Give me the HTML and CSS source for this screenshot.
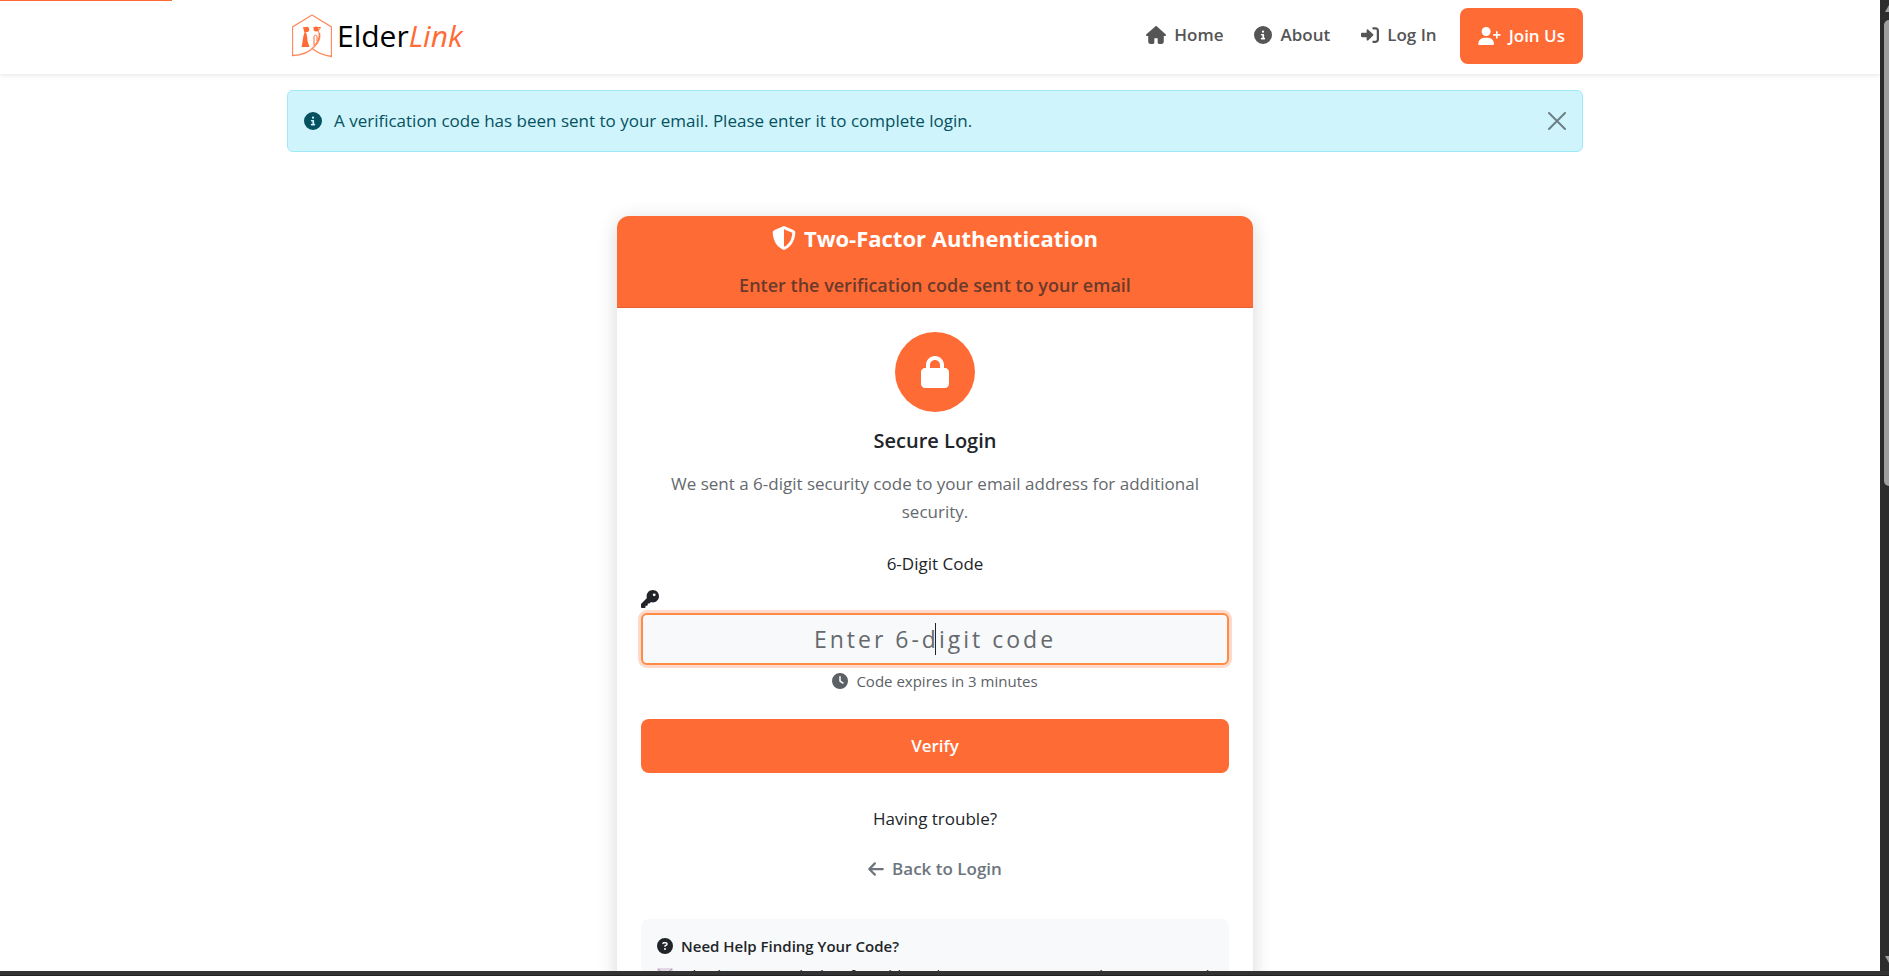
FILE: index.html
```html
<!DOCTYPE html>
<html lang="en">
<head>
  <meta charset="UTF-8">
  <meta name="viewport" content="width=device-width, initial-scale=1.0">
  <title>Two-Factor Authentication - ElderLink</title>
  <link rel="stylesheet" href="styles.css">
</head>
<body>
  <div class="window">
    <div class="page">
      <div class="progress"></div>
      <header class="navbar">
        <div class="container nav-inner">
          <a class="brand" href="#">
            <svg class="brand-logo" viewBox="0 0 40 44" aria-hidden="true">
              <path d="M20 1L39.500 13V42.500C31 41.500 25 38.500 19.500 34M20 1L.500 13V41.500C10 41.500 18 37.500 23 32C27 28 28.500 24 27.500 19" fill="none" stroke="#ff8a60" stroke-width="1.300"/>
              <circle cx="14.500" cy="15.500" r="2.700" fill="#ff6b35"/>
              <path d="M11 13L15 13.500L13.500 18C15 20 15.500 24 15.500 27L17.500 33H9.500C11 28 10.500 23 12.500 18.500Z" fill="#ff6b35"/>
              <circle cx="24" cy="15" r="2.500" fill="#ff6b35"/>
              <path d="M21.500 13.500L28.500 13.500L26 17C28 20 28 26 22 31.500V23C22 20.500 25 20.500 25 23V27" fill="none" stroke="#ff6b35" stroke-width="1"/>
            </svg>
            <span>Elder<em>Link</em></span>
          </a>
          <nav class="nav-links">
            <a class="nav-link" href="#">
              <svg class="icon icon-wide" viewBox="0 0 576 512" aria-hidden="true"><path d="M575.800 255.500c0 18-15 32.100-32 32.100h-32l.7 160.200c0 35.300-28.700 64-64 64H376c-22 0-40-18-40-40V352H240v120c0 22-18 40-40 40H128c-35 0-64-29-64-64V287.600H32c-18 0-32-14-32-32.100 0-9 3-17 10-24L266.400 8c7-7 15-8 22-8s15 2 21 7L564.800 231.500c8 7 12 15 11 24z"/></svg>
              Home
            </a>
            <a class="nav-link" href="#">
              <svg class="icon" viewBox="0 0 512 512" aria-hidden="true"><path d="M256 512A256 256 0 1 0 256 0a256 256 0 1 0 0 512zM216 336h24v-64h-24c-13 0-24-11-24-24s11-24 24-24h48c13 0 24 11 24 24v88h8c13 0 24 11 24 24s-11 24-24 24h-80c-13 0-24-11-24-24s11-24 24-24zm40-208a32 32 0 1 1 0 64 32 32 0 1 1 0-64z"/></svg>
              About
            </a>
            <a class="nav-link" href="#">
              <svg class="icon" viewBox="0 0 512 512" aria-hidden="true"><path d="M352 96h64c18 0 32 14 32 32v256c0 18-14 32-32 32h-64c-18 0-32 14-32 32s14 32 32 32h64c53 0 96-43 96-96V128c0-53-43-96-96-96h-64c-18 0-32 14-32 32s14 32 32 32zm-7.500 177c4.800-4.500 7.500-10.800 7.500-17.400s-2.700-12.900-7.500-17.400l-144-136c-7-6.600-17.200-8.400-26-4.600S160 110 160 119.600v72H32c-17.700 0-32 14.300-32 32v64c0 17.700 14.300 32 32 32h128v72c0 9.600 5.700 18.200 14.500 22s19 2 26-4.600z"/></svg>
              Log In
            </a>
            <a class="join" href="#">
              <svg class="icon icon-join" viewBox="0 0 640 512" aria-hidden="true"><path d="M96 128a128 128 0 1 1 256 0 128 128 0 1 1-256 0zM0 482.300C0 383.800 79.800 304 178.300 304h91.400C368.200 304 448 383.800 448 482.300c0 16.400-13.300 29.700-29.700 29.700H29.700C13.300 512 0 498.700 0 482.300zM504 312v-64h-64c-13.300 0-24-10.700-24-24s10.700-24 24-24h64v-64c0-13.300 10.700-24 24-24s24 10.700 24 24v64h64c13.300 0 24 10.700 24 24s-10.700 24-24 24h-64v64c0 13.300-10.700 24-24 24s-24-10.700-24-24z"/></svg>
              Join Us
            </a>
          </nav>
        </div>
      </header>

      <main class="container">
        <div class="alert" role="alert">
          <svg class="icon" viewBox="0 0 512 512" aria-hidden="true"><path d="M256 512A256 256 0 1 0 256 0a256 256 0 1 0 0 512zM216 336h24v-64h-24c-13 0-24-11-24-24s11-24 24-24h48c13 0 24 11 24 24v88h8c13 0 24 11 24 24s-11 24-24 24h-80c-13 0-24-11-24-24s11-24 24-24zm40-208a32 32 0 1 1 0 64 32 32 0 1 1 0-64z"/></svg>
          <span>A verification code has been sent to your email. Please enter it to complete login.</span>
          <button class="close" type="button" aria-label="Close">
            <svg viewBox="0 0 18 18" aria-hidden="true"><path d="M1 1l16 16M17 1L1 17" stroke="currentColor" stroke-width="2" stroke-linecap="round"/></svg>
          </button>
        </div>

        <section class="card">
          <div class="card-header">
            <h1>
              <svg class="icon-shield" viewBox="0 0 512 512" aria-hidden="true"><path fill-rule="evenodd" d="M256 0c4.600 0 9.200 1 13.400 2.900l188.300 79.900c22 9.300 38.400 31 38.300 57.200-.5 99.200-41.300 280.700-213.600 363.200-16.700 8-36.100 8-52.800 0C57.300 420.700 16.500 239.200 16 140c-.1-26.200 16.300-47.900 38.300-57.200L242.700 2.900C246.800 1 251.400 0 256 0zm0 66.800V445c138-66.800 175.100-214.800 176-303.400z"/></svg>
              Two-Factor Authentication
            </h1>
            <p>Enter the verification code sent to your email</p>
          </div>
          <div class="card-body">
            <div class="lock">
              <svg viewBox="0 0 448 512" aria-hidden="true"><path fill-rule="evenodd" d="M144 144v48h160v-48c0-44.200-35.800-80-80-80s-80 35.800-80 80zM80 192v-48C80 64.500 144.500 0 224 0s144 64.500 144 144v48h16c35.300 0 64 28.700 64 64v192c0 35.300-28.700 64-64 64H64c-35.300 0-64-28.700-64-64V256c0-35.300 28.700-64 64-64z"/></svg>
            </div>
            <h2>Secure Login</h2>
            <p class="intro">We sent a 6-digit security code to your email address for additional security.</p>

            <form class="code-form">
              <label for="code">6-Digit Code</label>
              <svg class="icon icon-key" viewBox="0 0 512 512" aria-hidden="true"><path fill-rule="evenodd" d="M336 352c97.200 0 176-78.800 176-176S433.200 0 336 0 160 78.800 160 176c0 18.700 2.900 36.800 8.300 53.700L7 391c-4.500 4.500-7 10.600-7 17v80c0 13.300 10.700 24 24 24h80c13.300 0 24-10.700 24-24v-40h40c13.300 0 24-10.700 24-24v-40h40c6.400 0 12.500-2.500 17-7l33.300-33.300c16.900 5.400 35 8.300 53.700 8.300zM376 96a40 40 0 1 1 0 80 40 40 0 1 1 0-80z"/></svg>
              <div class="code-field">
                <input id="code" type="text" inputmode="numeric" maxlength="6" placeholder="Enter 6-digit code" autocomplete="off">
                <span class="caret"></span>
              </div>
              <p class="expires">
                <svg class="icon-small" viewBox="0 0 512 512" aria-hidden="true"><path fill-rule="evenodd" d="M256 0a256 256 0 1 1 0 512A256 256 0 1 1 256 0zm-24 120v136c0 8 4 15.500 10.700 20l96 64c11 7.400 25.900 4.400 33.300-6.700s4.400-25.900-6.700-33.300L280 243.200V120c0-13.300-10.700-24-24-24s-24 10.700-24 24z"/></svg>
                Code expires in 3 minutes
              </p>
              <button class="verify" type="submit">Verify</button>
            </form>

            <p class="trouble">Having trouble?</p>
            <a class="back" href="#">
              <svg class="icon-back" viewBox="0 0 448 512" aria-hidden="true"><path d="M9.400 233.400c-12.500 12.500-12.500 32.800 0 45.300l160 160c12.500 12.500 32.800 12.500 45.300 0s12.500-32.800 0-45.300L109.200 288H416c17.700 0 32-14.300 32-32s-14.300-32-32-32H109.300l105.300-105.400c12.500-12.500 12.500-32.800 0-45.300s-32.800-12.500-45.300 0z"/></svg>
              Back to Login
            </a>

            <div class="help">
              <h3>
                <svg class="icon-small" viewBox="0 0 512 512" aria-hidden="true"><path fill-rule="evenodd" d="M256 512A256 256 0 1 0 256 0a256 256 0 1 0 0 512zM169.800 165.300c7.900-22.300 29.100-37.300 52.800-37.300h58.300c34.900 0 63.100 28.300 63.100 63.100 0 22.600-12.100 43.500-31.700 54.800L280 264.400c-.2 13-10.900 23.600-24 23.600-13.300 0-24-10.700-24-24v-13.500c0-8.600 4.600-16.500 12.100-20.800l44.300-25.400c4.700-2.700 7.600-7.700 7.600-13.100 0-8.400-6.800-15.100-15.100-15.100h-58.300c-3.400 0-6.400 2.100-7.500 5.300l-.4 1.200c-4.400 12.500-18.200 19-30.600 14.600s-19-18.200-14.600-30.600zM256 320a32 32 0 1 1 0 64 32 32 0 1 1 0-64z"/></svg>
                Need Help Finding Your Code?
              </h3>
              <ul>
                <li>
                  <svg class="icon-mail" viewBox="0 0 16 16" aria-hidden="true"><rect y="1" width="16" height="13" rx="1" fill="#e4d8e6"/><path d="M1 2l7 6 7-6" fill="none" stroke="#a98bb0"/></svg>
                  Check your email inbox for "ElderLink - Your Two-Factor Authentication Code"
                </li>
              </ul>
            </div>
          </div>
        </section>
      </main>
    </div>
    <div class="scrollbar">
      <span class="arrow-up"></span>
      <span class="thumb"></span>
      <span class="arrow-down"></span>
    </div>
  </div>
  <div class="bottom-edge"></div>
</body>
</html>
```
FILE: styles.css
```css
* {
  box-sizing: border-box;
}
body {
  margin: 0;
  height: 100vh;
  display: flex;
  flex-direction: column;
  overflow: hidden;
  background: #fff;
  color: #212529;
  font-family: "Open Sans", "Noto Sans", sans-serif;
  font-size: 17px;
  line-height: 28px;
}
h1, h2, h3, p, ul {
  margin: 0;
  padding: 0;
}
a {
  color: inherit;
  text-decoration: none;
}
svg {
  flex-shrink: 0;
  fill: currentColor;
}
.window {
  flex: 1;
  min-height: 0;
  display: flex;
}
.page {
  flex: 1;
  position: relative;
  overflow: hidden;
}
.container {
  width: calc(100% - 10px);
  max-width: 1296px;
  margin-left: max(0px, calc(50% - 653px));
}
.progress {
  position: absolute;
  top: 0;
  left: 0;
  width: 172px;
  height: 1px;
  background: #ff6b35;
}

/* Navbar */
.navbar {
  box-shadow: 0 2px 4px rgba(0, 0, 0, 0.08);
}
.nav-inner {
  height: 74px;
  padding-bottom: 2px;
  display: flex;
  align-items: center;
  justify-content: space-between;
}
.brand {
  display: flex;
  align-items: center;
  gap: 5px;
  padding-left: 5px;
  color: #000;
  font-size: 30px;
}
.brand-logo {
  width: 40px;
  height: 44px;
}
.brand em {
  color: #ff6b35;
}
.nav-links {
  display: flex;
  align-items: center;
  gap: 31px;
  color: #555;
  font-weight: 600;
}
.nav-link, .join {
  display: flex;
  align-items: center;
  gap: 8px;
}
.nav-link {
  padding-bottom: 2px;
}
.join {
  height: 56px;
  margin-left: -8px;
  padding: 0 18px;
  border-radius: 8px;
  background: #ff6b35;
  color: #fff;
}
.icon {
  width: 18px;
  height: 18px;
}
.icon-wide {
  width: 20px;
}
.icon-join {
  width: 23px;
}

/* Alert */
.alert {
  display: flex;
  align-items: center;
  gap: 12px;
  margin-top: 16px;
  padding: 16px;
  border: 1px solid #9eeaf9;
  border-radius: 6px;
  background: #cff4fc;
  color: #055160;
}
.close {
  display: flex;
  margin-left: auto;
  padding: 0;
  border: 0;
  background: none;
  color: #6b7f85;
  cursor: pointer;
}
.close svg {
  width: 18px;
  height: 18px;
}

/* Card */
.card {
  max-width: 636px;
  margin: 64px auto 0;
  border-radius: 12px;
  box-shadow: 0 4px 20px rgba(0, 0, 0, 0.16);
  text-align: center;
}
.card-header {
  padding: 8px 16px;
  border-bottom: 1px solid #e66030;
  border-radius: 12px 12px 0 0;
  background: #ff6b35;
}
.card-header h1 {
  display: flex;
  align-items: center;
  justify-content: center;
  gap: 8px;
  color: #fff;
  font-size: 22px;
  line-height: 28px;
  font-weight: 700;
}
.card-header p {
  margin-top: 19px;
  color: #6b3a2a;
  font-size: 18px;
  font-weight: 600;
}
.icon-shield {
  width: 24px;
  height: 24px;
}
.card-body {
  padding: 24px;
}
.lock {
  width: 80px;
  height: 80px;
  margin: 0 auto 16px;
  display: flex;
  align-items: center;
  justify-content: center;
  border-radius: 50%;
  background: #ff6b35;
  color: #fff;
}
.lock svg {
  width: 28px;
  height: 32px;
}
.card-body h2 {
  font-size: 20px;
  line-height: 26px;
  font-weight: 600;
}
.intro {
  margin: 16px 24px 24px;
  color: #65696d;
}
.code-form {
  display: flex;
  flex-direction: column;
}
.icon-key {
  margin: 12px 0 5px;
}
.code-field {
  position: relative;
}
.code-form input {
  display: block;
  width: 100%;
  height: 52px;
  padding: 0 16px;
  border: 2px solid #ff8c42;
  border-radius: 6px;
  outline: 0;
  background: #f8f9fa;
  box-shadow: 0 0 0 3px rgba(255, 107, 53, 0.25);
  color: #212529;
  font: inherit;
  font-size: 23px;
  letter-spacing: 3px;
  text-align: center;
}
.code-form input::placeholder {
  color: #65696d;
  opacity: 1;
}
.caret {
  position: absolute;
  top: 10px;
  left: 50%;
  width: 1px;
  height: 32px;
  background: #212529;
}
.expires {
  display: flex;
  align-items: center;
  justify-content: center;
  gap: 8px;
  margin-top: 4px;
  color: #5c6166;
  font-size: 15px;
  line-height: 24px;
}
.icon-small {
  width: 16px;
  height: 16px;
}
.verify {
  height: 54px;
  margin-top: 26px;
  border: 0;
  border-radius: 8px;
  background: #ff6b35;
  color: #fff;
  font: inherit;
  font-weight: 600;
  cursor: pointer;
}
.trouble {
  margin-top: 32px;
}
.back {
  display: flex;
  align-items: center;
  justify-content: center;
  gap: 8px;
  margin-top: 22px;
  color: #6c757d;
  font-weight: 600;
}
.icon-back {
  width: 16px;
  height: 18px;
}
.help {
  margin-top: 36px;
  padding: 16px;
  border-radius: 8px;
  background: #f8f9fa;
  text-align: left;
}
.help h3 {
  display: flex;
  align-items: center;
  gap: 8px;
  font-size: 15px;
  line-height: 22px;
  font-weight: 600;
}
.help ul {
  margin-top: 6px;
  list-style: none;
  font-size: 15px;
  line-height: 24px;
}
.help li {
  display: flex;
  align-items: center;
  gap: 10px;
  white-space: nowrap;
}
.icon-mail {
  width: 16px;
  height: 16px;
}

/* Window edges */
.scrollbar {
  width: 9px;
  display: flex;
  flex-direction: column;
  align-items: flex-end;
  overflow: hidden;
  background: #2c2c2c;
}
.thumb {
  width: 5px;
  height: 48%;
  margin-top: 8px;
  border-radius: 5px 0 0 5px;
  background: #9f9f9f;
}
.arrow-up, .arrow-down {
  width: 4px;
  height: 7px;
  background: #9f9f9f;
}
.arrow-up {
  margin-top: 5px;
  clip-path: polygon(100% 0, 100% 100%, 0 100%);
}
.arrow-down {
  margin: auto 0 8px;
  clip-path: polygon(0 0, 100% 0, 100% 100%);
}
.bottom-edge {
  height: 5px;
  background: #333;
  border-bottom: 1px solid #222;
}
```
